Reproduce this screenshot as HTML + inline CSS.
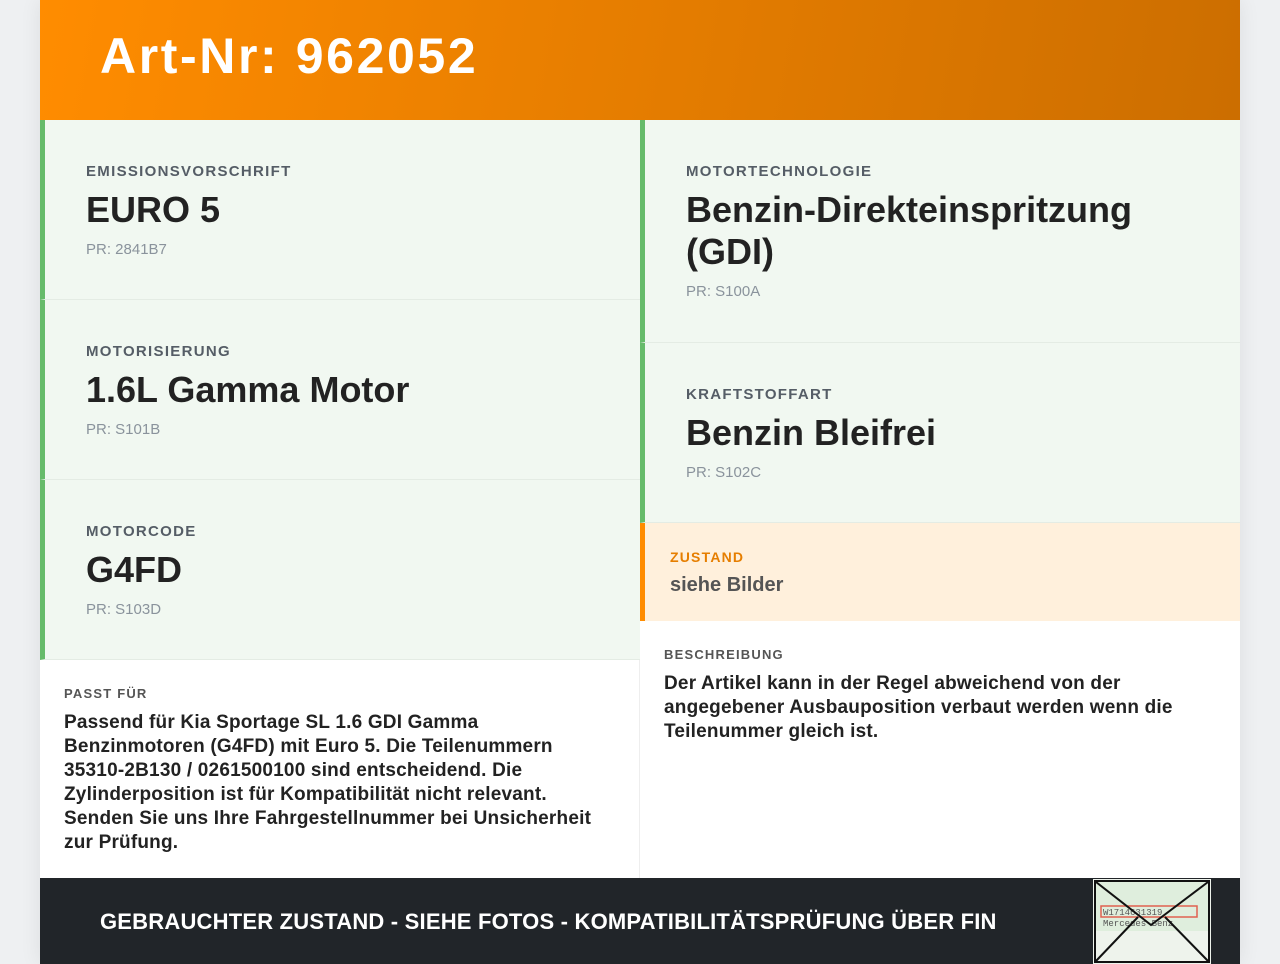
<!DOCTYPE html>
<html><head><meta charset="utf-8"><style>
*{margin:0;padding:0;box-sizing:border-box}
body{width:1280px;height:964px;background:#eef0f2;font-family:"Liberation Sans",sans-serif;overflow:hidden}
.wrap{position:absolute;left:40px;top:0;width:1200px;height:964px;background:#fff;box-shadow:0 0 20px rgba(0,0,0,.08)}
.hdr{height:120px;background:linear-gradient(100deg,#ff8c00,#cc6e00);color:#fff;font-weight:bold;font-size:50px;padding:27px 0 0 60px;letter-spacing:2.6px}
.cell{position:absolute;background:#f1f8f1;border-left:5px solid #66bb6a;padding:43px 0 0 41px;border-bottom:1px solid #e4ece4}
.lab{font-size:15px;font-weight:bold;color:#555d66;letter-spacing:1.3px;height:20px}
.val{font-size:36px;font-weight:bold;color:#222;line-height:42px;margin-top:6px;max-width:480px}
.pr{font-size:15px;color:#8a939c;margin-top:10px}
.txt{position:absolute;padding:26px 24px 0 24px;background:#fff}
.txt .lab{font-size:13px;color:#555;letter-spacing:1.2px;height:auto}
.txt p{font-size:19px;font-weight:bold;color:#222;line-height:24px;margin-top:10px;letter-spacing:.2px}
.ftr{position:absolute;left:0;top:878px;width:1200px;height:86px;background:#212529;color:#fff;font-weight:bold;font-size:22px;padding:31px 0 0 60px;letter-spacing:.2px}
</style></head><body><div class="wrap">
<div class="hdr">Art-Nr: 962052</div>
<div class="cell" style="left:0;top:120px;width:600px;height:180px"><div class="lab">EMISSIONSVORSCHRIFT</div><div class="val">EURO 5</div><div class="pr">PR: 2841B7</div></div>
<div class="cell" style="left:0;top:300px;width:600px;height:180px"><div class="lab">MOTORISIERUNG</div><div class="val">1.6L Gamma Motor</div><div class="pr">PR: S101B</div></div>
<div class="cell" style="left:0;top:480px;width:600px;height:180px"><div class="lab">MOTORCODE</div><div class="val">G4FD</div><div class="pr">PR: S103D</div></div>
<div class="cell" style="left:600px;top:120px;width:600px;height:223px"><div class="lab">MOTORTECHNOLOGIE</div><div class="val">Benzin-Direkteinspritzung (GDI)</div><div class="pr">PR: S100A</div></div>
<div class="cell" style="left:600px;top:343px;width:600px;height:180px"><div class="lab">KRAFTSTOFFART</div><div class="val">Benzin Bleifrei</div><div class="pr">PR: S102C</div></div>
<div style="position:absolute;left:600px;top:523px;width:600px;height:98px;background:#fff0dc;border-left:5px solid #ff8c00;padding:26px 0 0 25px"><div style="font-size:14px;font-weight:bold;color:#e67e00;letter-spacing:1.2px">ZUSTAND</div><div style="font-size:20px;font-weight:bold;color:#555;margin-top:9px">siehe Bilder</div></div>
<div class="txt" style="left:0;top:660px;width:600px;height:218px;border-right:1px solid #eee"><div class="lab">PASST FÜR</div><p style="width:550px">Passend für Kia Sportage SL 1.6 GDI Gamma Benzinmotoren (G4FD) mit Euro 5. Die Teilenummern 35310-2B130 / 0261500100 sind entscheidend. Die Zylinderposition ist für Kompatibilität nicht relevant. Senden Sie uns Ihre Fahrgestellnummer bei Unsicherheit zur Prüfung.</p></div>
<div class="txt" style="left:600px;top:621px;width:600px;height:257px"><div class="lab">BESCHREIBUNG</div><p>Der Artikel kann in der Regel abweichend von der angegebener Ausbauposition verbaut werden wenn die Teilenummer gleich ist.</p></div>
<div class="ftr">GEBRAUCHTER ZUSTAND - SIEHE FOTOS - KOMPATIBILITÄTSPRÜFUNG ÜBER FIN</div>
<svg style="position:absolute;left:1053px;top:879px" width="118" height="85" viewBox="0 0 118 85">
<rect x="0" y="0" width="118" height="85" fill="#eef3ec"/>
<rect x="2" y="2" width="114" height="50" fill="#dfeedd"/>
<rect x="8" y="27" width="96" height="11" fill="none" stroke="#e06050" stroke-width="1.5"/>
<text x="10" y="36" font-size="9" font-family="Liberation Mono" fill="#555">W1714631319</text>
<text x="10" y="47" font-size="9" font-family="Liberation Mono" fill="#555">Mercedes-Benz</text>
<path d="M3 3 L58 46 L115 3 M3 82 L45 38 M115 82 L72 38" stroke="#111" stroke-width="2" fill="none"/>
<rect x="2" y="2" width="114" height="81" fill="none" stroke="#111" stroke-width="2"/>
</svg>
</div></body></html>
